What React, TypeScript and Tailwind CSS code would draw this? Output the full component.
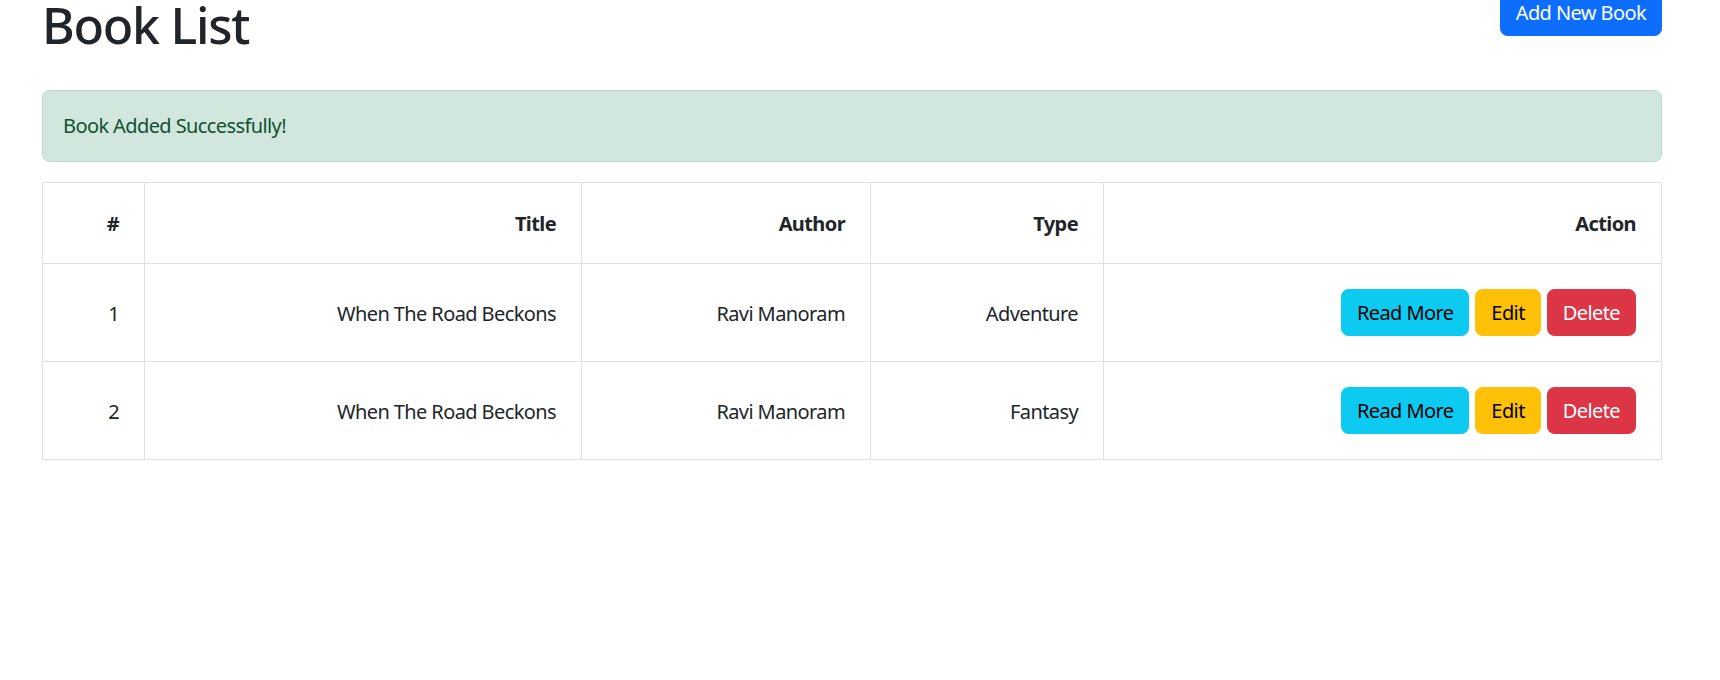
const books = [
  { id: 1, title: "When The Road Beckons", author: "Ravi Manoram", type: "Adventure" },
  { id: 2, title: "When The Road Beckons", author: "Ravi Manoram", type: "Fantasy" },
];

const cell = "border border-[#dee2e6] pt-[26px] pb-[24px] px-[25px] text-right align-middle";

export default function App() {
  return (
    <div className="min-h-[680px] bg-white text-[#212529] font-['Noto_Sans',sans-serif] text-[20px] leading-[30px] tracking-[-0.03em]">
      <div className="ml-[42px] w-[1620px] -mt-[11px]">
        {/* Header */}
        <div className="flex justify-between items-start">
          <h1 className="text-[50px] leading-[60px] font-medium tracking-[-0.025em] mt-[6px]">Book List</h1>
          <button className="bg-[#0d6efd] text-white rounded-[7.5px] px-[15px] py-[7.5px] border border-[#0d6efd]">
            Add New Book
          </button>
        </div>

        {/* Alert */}
        <div className="mt-[35px] bg-[#d1e7dd] border border-[#badbcc] text-[#0f5132] rounded-[7.5px] p-[20px]">
          Book Added Successfully!
        </div>

        {/* Table */}
        <table className="mt-[20px] w-full border-collapse border border-[#dee2e6]">
          <thead>
            <tr>
              <th className={`${cell} font-bold w-[102px]`}>#</th>
              <th className={`${cell} font-bold w-[437px]`}>Title</th>
              <th className={`${cell} font-bold w-[289px]`}>Author</th>
              <th className={`${cell} font-bold w-[233px]`}>Type</th>
              <th className={`${cell} font-bold`}>Action</th>
            </tr>
          </thead>
          <tbody>
            {books.map((b) => (
              <tr key={b.id}>
                <td className={cell}>{b.id}</td>
                <td className={cell}>{b.title}</td>
                <td className={cell}>{b.author}</td>
                <td className={cell}>{b.type}</td>
                <td className={cell}>
                  <div className="flex justify-end gap-[6px] -mt-[1px] mb-[1px]">
                    <button className="bg-[#0dcaf0] text-black rounded-[7.5px] px-[15px] py-[7.5px] border border-[#0dcaf0]">
                      Read More
                    </button>
                    <button className="bg-[#ffc107] text-black rounded-[7.5px] px-[15px] py-[7.5px] border border-[#ffc107]">
                      Edit
                    </button>
                    <button className="bg-[#dc3545] text-white rounded-[7.5px] px-[15px] py-[7.5px] border border-[#dc3545]">
                      Delete
                    </button>
                  </div>
                </td>
              </tr>
            ))}
          </tbody>
        </table>
      </div>
    </div>
  );
}
